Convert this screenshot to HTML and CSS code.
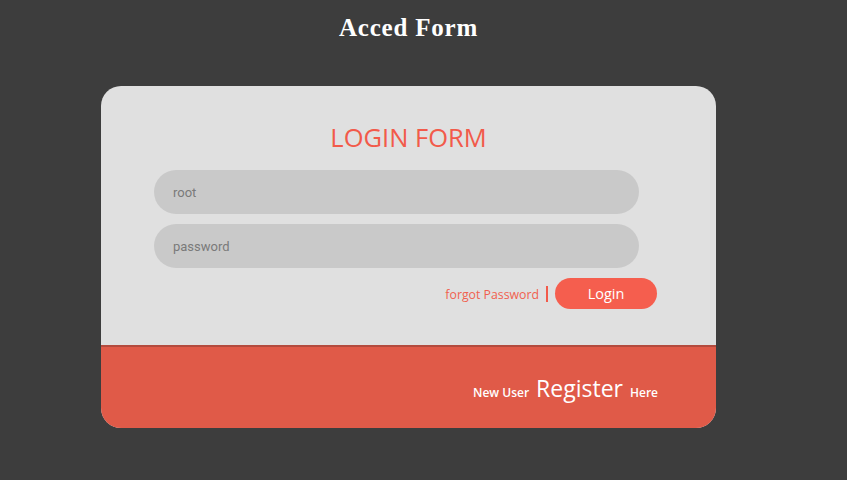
FILE: index.html
```html
<!DOCTYPE html>
<html>
<head>
<meta charset="utf-8">
<title>Acced Form</title>
<link rel="stylesheet" href="styles.css">
</head>
<body>
<div class="wrap">
  <h1 class="title">Acced Form</h1>
  <div class="card">
    <div class="top">
      <h2 class="form-title">LOGIN FORM</h2>
      <input class="field" type="text" placeholder="root">
      <input class="field" type="password" placeholder="password">
      <div class="actions">
        <a class="forgot" href="#">forgot Password</a>
        <span class="sep"></span>
        <button class="login" type="button">Login</button>
      </div>
    </div>
    <div class="bottom">
      <span class="small">New User</span>
      <span class="big">Register</span>
      <span class="small light">Here</span>
    </div>
  </div>
</div>
</body>
</html>
```
FILE: styles.css
```css
html, body {
  margin: 0;
  padding: 0;
  background: #3d3d3d;
  height: 100%;
}
.wrap {
  width: 615px;
  margin-left: 101px;
  padding-top: 14px;
}
.title {
  margin: 0 0 45px;
  text-align: center;
  font-family: "Liberation Serif", serif;
  font-weight: bold;
  font-size: 25px;
  letter-spacing: 0.8px;
  line-height: 27px;
  color: #ffffff;
}
.card {
  border-radius: 20px;
  overflow: hidden;
  background: #e0e0e0;
}
.top {
  height: 259px;
  box-sizing: border-box;
  padding: 34px 59px 0 53px;
  display: flex;
  flex-direction: column;
  align-items: flex-start;
  gap: 10px;
}
.form-title {
  margin: 0 0 5px;
  align-self: stretch;
  text-align: center;
  padding-left: 6px;
  font-family: "Open Sans", "Noto Sans", sans-serif;
  font-weight: normal;
  font-size: 25.5px;
  line-height: 35px;
  color: #f25a4a;
}
.field {
  width: 485px;
  height: 44px;
  box-sizing: border-box;
  border: none;
  outline: none;
  border-radius: 22px;
  background: #c9c9c9;
  padding: 0 19px;
  font-family: Roboto, sans-serif;
  font-size: 13px;
  color: #757575;
}
.field::placeholder {
  color: #7a7a7a;
}
.actions {
  align-self: stretch;
  display: flex;
  justify-content: flex-end;
  align-items: center;
  gap: 7px;
}
.forgot {
  font-family: "Open Sans", "Noto Sans", sans-serif;
  font-size: 12.3px;
  color: #f0604f;
  text-decoration: none;
  padding-top: 1px;
}
.sep {
  width: 2px;
  height: 16px;
  background: #f25a4a;
}
.login {
  width: 102px;
  height: 31px;
  border: none;
  border-radius: 16px;
  background: #f55e4e;
  color: #ffffff;
  font-family: "Open Sans", "Noto Sans", sans-serif;
  font-size: 14.5px;
  padding: 0;
}
.bottom {
  border-top: 2px solid #b34b3e;
  background: #e05a48;
  height: 83px;
  box-sizing: border-box;
  display: flex;
  justify-content: flex-end;
  align-items: baseline;
  gap: 7px;
  padding: 25px 58px 0 0;
  color: #ffffff;
  font-family: "Open Sans", "Noto Sans", sans-serif;
}
.small {
  font-size: 12px;
  font-weight: 600;
}
.big {
  font-size: 23px;
}
```
